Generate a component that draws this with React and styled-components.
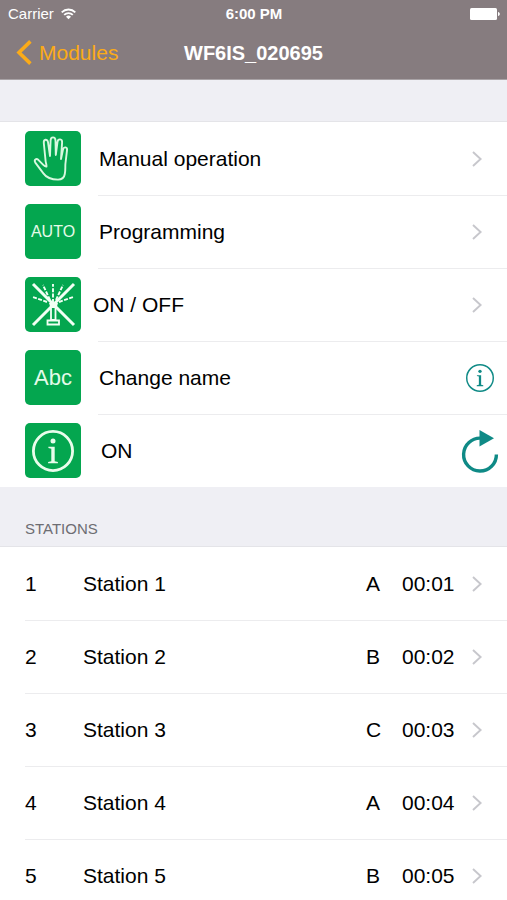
import React from 'react';
import styled, {createGlobalStyle, css} from 'styled-components';

const colors = {
    bar: '#867c7f',
    orange: '#fbab18',
    green: '#04a64f',
    teal: '#0f8a86',
    line: '#ececee',
    group: '#efeff4',
    chevron: '#c7c7cc'
};

const GlobalStyle = createGlobalStyle`
    body {
        margin: 0;
        background: ${colors.group};
        color: #000;
        font-family: "Liberation Sans", Arial, sans-serif;
        font-size: 21px;
        line-height: 24px;
    }
`;

const Header = styled.header`
    background: ${colors.bar};
    color: white;
    border-bottom: 1px solid #a9a3a6;
`;

const StatusBar = styled.div`
    display: grid;
    grid-template-columns: 1fr auto 1fr;
    align-items: center;
    height: 28px;
    padding: 0 7px 0 8px;
    font-size: 15px;
    line-height: 20px;
`;

const Carrier = styled.div`
    display: flex;
    align-items: center;
    gap: 7px;
`;

const Clock = styled.div`
    font-weight: bold;
`;

const BatteryBox = styled.div`
    display: flex;
    justify-content: flex-end;
`;

const NavBar = styled.div`
    display: grid;
    grid-template-columns: 1fr auto 1fr;
    align-items: center;
    height: 51px;
    padding: 0 16px 2px;
    box-sizing: border-box;
`;

const BackButton = styled.button`
    display: flex;
    align-items: center;
    justify-self: start;
    gap: 7px;
    padding: 0;
    border: none;
    background: none;
    color: ${colors.orange};
    font: inherit;
    cursor: pointer;
`;

const Title = styled.h1`
    margin: 0;
    font-size: 20px;
    font-weight: bold;
`;

const SectionHeader = styled.h2`
    margin: 0;
    box-sizing: border-box;
    height: ${props => props.$empty ? 42 : 60}px;
    padding: 32px 25px 0;
    color: #6d6d72;
    font-size: 15px;
    font-weight: normal;
    line-height: 20px;
`;

const List = styled.ul`
    margin: 0;
    padding: 0;
    list-style: none;
    background: white;
    box-shadow: 0 -1px 0 #e4e4e8;
`;

const Item = styled.li`
    &:not(:first-child) {
        background: linear-gradient(${colors.line}, ${colors.line}) ${props => props.$inset}px 0 / 100% 1px no-repeat;
    }
`;

const rowStyle = css`
    display: flex;
    align-items: center;
    box-sizing: border-box;
    width: 100%;
    height: 73px;
    padding: 0 0 0 25px;
    border: none;
    background: none;
    color: inherit;
    font: inherit;
    text-align: left;
`;

const RowButton = styled.button`
    ${rowStyle}
    cursor: pointer;
`;

const RowBox = styled.div`
    ${rowStyle}
`;

const Tile = styled.span`
    display: flex;
    align-items: center;
    justify-content: center;
    flex: none;
    width: 56px;
    height: 55px;
    border-radius: 5px;
    background: ${colors.green};
    color: #e4fbe9;
    font-size: ${props => props.$small ? 16 : 22}px;
`;

const Label = styled.span`
    flex: 1;
    padding-left: ${props => props.$gap}px;
`;

const Accessory = styled.span`
    display: flex;
    justify-content: center;
    width: 60px;
`;

const IconButton = styled.button`
    display: flex;
    align-items: center;
    justify-content: center;
    width: 54px;
    height: 54px;
    padding: 0;
    border: none;
    background: none;
    cursor: pointer;
`;

const StationNumber = styled.span`
    width: 58px;
`;

const StationName = styled.span`
    flex: 1;
`;

const Program = styled.span`
    width: 36px;
`;

const Time = styled.span`
    width: 45px;
    white-space: nowrap;
`;

const WifiIcon = () => (
    <svg width="15" height="12" viewBox="0 0 15 12" fill="none" stroke="white" strokeWidth="1.8">
        <path d="M.7 4.3a9.6 9.6 0 0 1 13.6 0"/>
        <path d="M3.2 6.9a6 6 0 0 1 8.6 0"/>
        <path d="M7.5 11.2 5 8.7a3.6 3.6 0 0 1 5 0z" fill="white" stroke="none"/>
    </svg>
);

const BatteryIcon = () => (
    <svg width="30" height="12" viewBox="0 0 30 12" fill="white">
        <rect x="0" y="0" width="27" height="12" rx="1.5"/>
        <path d="M28 4c2.4.3 2.4 3.7 0 4z"/>
    </svg>
);

const BackIcon = () => (
    <svg width="16" height="25" viewBox="0 0 16 25" fill="none" stroke={colors.orange} strokeWidth="3.6">
        <path d="M14.4 1.4 3 12.5l11.4 11.1"/>
    </svg>
);

const Chevron = () => (
    <svg width="10" height="16" viewBox="0 0 10 16" fill="none" stroke={colors.chevron} strokeWidth="1.9">
        <path d="M1 1l7.6 7L1 15"/>
    </svg>
);

const HandIcon = () => (
    <svg width="56" height="55" viewBox="0 0 56 55" fill="none" stroke="#d8f8df" strokeWidth="1.9" strokeLinejoin="round" strokeLinecap="round">
        <path d="M21.5 35.5c.3-1.500-.7-3.500-.9-5.500L18.8 12c-.4-3.900 3.600-4.600 4.200-.8L25 25l.6-15.500c.1-4.200 4.700-4.200 4.900 0L30.800 24l1.700-13c.5-3.800 5-3.400 4.600.6L36 28l2-9.500c.8-3.200 4.600-2.600 4 .8L40.400 33c-.2 3 .2 6-.6 10-.6 3.800-2.600 5.600-6.800 5.600-6.600 0-11-1-14.600-6.200l-8.100-10.800c-1.600-3 .9-4.400 3-2.800l5 5c1.200 1.200 2.300 2 3.200 1.700z"/>
    </svg>
);

const SprinklerOffIcon = () => (
    <svg width="56" height="55" viewBox="0 0 56 55" fill="none" stroke="#f2fff4">
        <path strokeWidth="1.9" strokeDasharray="4 1.4" d="M28 26V7M25 23 18 8M31 23l7-15M22 25 8 20M34 25l14-5"/>
        <path strokeWidth="3" d="M8 7l41 41M49 7 8 48"/>
        <path strokeWidth="1.8" fill={colors.green} d="M26 30h4.500v13H26zM22.500 43.500h11.500v4H22.500z"/>
        <path fill="#f2fff4" stroke="none" d="M24 26h9l-1.500 5h-6z"/>
    </svg>
);

// serif "i" inside a ring, used for the tile and for the small info button
const InfoIcon = ({size, color, ring}) => (
    <svg width={size} height={size} viewBox="0 0 42 42" fill={color}>
        <circle cx="21" cy="21" r={21 - ring / 2} fill="none" stroke={color} strokeWidth={ring}/>
        <circle cx="21" cy="11" r="2.5"/>
        <path d="M16.4 16.8h6.3v14.4l3.2.7v1.3h-9.8v-1.3l3.2-.7V18.8l-2.9-.7z"/>
    </svg>
);

const RefreshIcon = () => (
    <svg width="38" height="44" viewBox="0 0 38 44" fill="none" stroke={colors.teal} strokeWidth="3.4">
        <path d="M20 9.2A16.4 16.4 0 1 0 35.4 25.4"/>
        <path d="M18.5 1 33 9.2 18.5 17.5z" fill={colors.teal} stroke="none"/>
    </svg>
);

const menu = [
    {label: 'Manual operation', gap: 18, icon: <HandIcon/>},
    {label: 'Programming', gap: 18, icon: 'AUTO', small: true},
    {label: 'ON / OFF', gap: 12, icon: <SprinklerOffIcon/>},
    {
        label: 'Change name',
        gap: 18,
        icon: 'Abc',
        action: 'Module information',
        actionIcon: <InfoIcon size={28} color={colors.teal} ring={2.2}/>
    },
    {
        label: 'ON',
        gap: 20,
        icon: <InfoIcon size={42} color="#e9fdec" ring={2.8}/>,
        action: 'Refresh',
        actionIcon: <RefreshIcon/>
    }
];

const stations = [
    {id: 1, name: 'Station 1', program: 'A', time: '00:01'},
    {id: 2, name: 'Station 2', program: 'B', time: '00:02'},
    {id: 3, name: 'Station 3', program: 'C', time: '00:03'},
    {id: 4, name: 'Station 4', program: 'A', time: '00:04'},
    {id: 5, name: 'Station 5', program: 'B', time: '00:05'}
];

const MenuItem = ({label, gap, icon, small, action, actionIcon}) => {
    const Row = action ? RowBox : RowButton;
    return (
        <Item $inset={98}>
            <Row>
                <Tile $small={small}>{icon}</Tile>
                <Label $gap={gap}>{label}</Label>
                {action
                    ? <IconButton aria-label={action}>{actionIcon}</IconButton>
                    : <Accessory><Chevron/></Accessory>
                }
            </Row>
        </Item>
    );
};

const StationItem = ({id, name, program, time}) => (
    <Item $inset={25}>
        <RowButton>
            <StationNumber>{id}</StationNumber>
            <StationName>{name}</StationName>
            <Program>{program}</Program>
            <Time>{time}</Time>
            <Accessory><Chevron/></Accessory>
        </RowButton>
    </Item>
);

export default function App() {
    return (
        <>
            <GlobalStyle/>
            <Header>
                <StatusBar>
                    <Carrier>Carrier <WifiIcon/></Carrier>
                    <Clock>6:00 PM</Clock>
                    <BatteryBox><BatteryIcon/></BatteryBox>
                </StatusBar>
                <NavBar>
                    <BackButton><BackIcon/>Modules</BackButton>
                    <Title>WF6IS_020695</Title>
                </NavBar>
            </Header>
            <main>
                <SectionHeader as="div" $empty/>
                <List>
                    {menu.map(item => <MenuItem key={item.label} {...item}/>)}
                </List>
                <SectionHeader>STATIONS</SectionHeader>
                <List>
                    {stations.map(station => <StationItem key={station.id} {...station}/>)}
                </List>
            </main>
        </>
    );
}
